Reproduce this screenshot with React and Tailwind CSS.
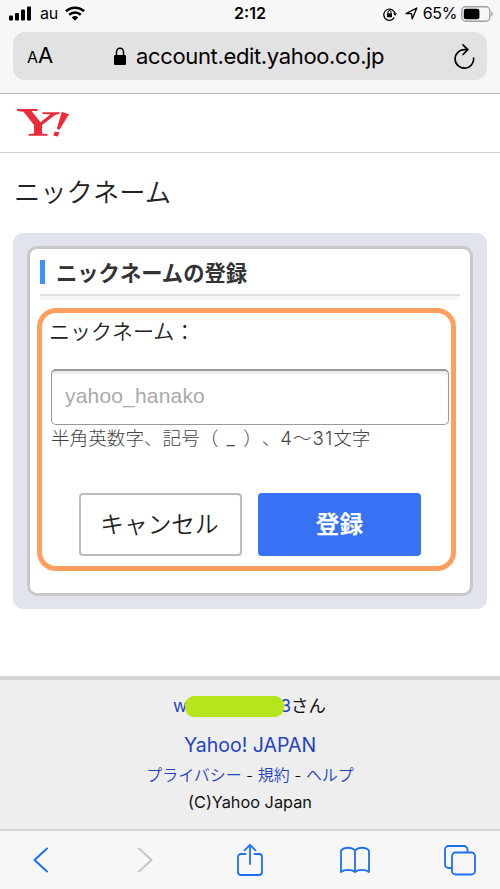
import React, { useState } from 'react';

function StatusBar() {
  return (
    <div className="flex h-8 items-start text-black">
      <div className="flex flex-1 items-center pl-[9px] h-[27px]">
        <svg width="22" height="15" viewBox="0 0 22 15" fill="currentColor">
          <rect x="0" y="9.5" width="4" height="5" rx="1" />
          <rect x="6" y="7" width="4" height="7.5" rx="1" />
          <rect x="12" y="3.5" width="4" height="11" rx="1" />
          <rect x="18" y="0.5" width="4" height="14" rx="1" />
        </svg>
        <span className="ml-[9px] text-[16px] leading-[27px] tracking-[-0.2px]">au</span>
        <svg className="ml-[7px]" width="20" height="15" viewBox="0 0 20 15" fill="none" stroke="currentColor">
          <path d="M1 5.2C6 .6 14 .6 19 5.2" strokeWidth="2.7" />
          <path d="M4.2 8.8C7.6 5.8 12.4 5.8 15.8 8.8" strokeWidth="2.5" />
          <path d="M6.8 11.4a4.8 4.8 0 0 1 6.400 0L10 14.700z" fill="currentColor" stroke="none" />
        </svg>
      </div>
      <span className="mr-[2px] text-[16px] font-semibold leading-[27px]">2:12</span>
      <div className="flex flex-1 items-center justify-end pr-[7px] h-[27px]">
        <svg width="14" height="14" viewBox="0 0 14 14" fill="none" stroke="currentColor" strokeWidth="1.3">
          <path d="M11.2 10.6A5.600 5.600 0 1 1 12 7.400" />
          <path d="M10.1 6.200h3.800L12 9z" fill="currentColor" stroke="none" />
          <rect x="4" y="6.200" width="5" height="4" rx=".5" fill="currentColor" stroke="none" />
          <path d="M5 6.300V5a1.500 1.500 0 0 1 3 0v1.300" strokeWidth="1" />
        </svg>
        <svg className="ml-[8px]" width="13" height="13" viewBox="0 0 13 13" fill="none" stroke="currentColor" strokeWidth="1.3" strokeLinejoin="round">
          <path d="M1 6.600 11.800 1 7.200 12 6.600 6.700z" />
        </svg>
        <span className="ml-[5px] text-[16px] leading-[27px] tracking-[-0.4px]">65%</span>
        <svg className="ml-[4px]" width="32" height="16" viewBox="0 0 32 16">
          <rect x=".8" y=".8" width="28" height="14.4" rx="4" fill="none" stroke="#a0a0a0" strokeWidth="1.4" />
          <rect x="2.8" y="2.8" width="15.6" height="10.4" rx="2" />
          <path d="M30.200 5.400c2 .8 2 4.400 0 5.200z" fill="#a0a0a0" />
        </svg>
      </div>
    </div>
  );
}

function AddressBar() {
  return (
    <div className="mx-[13px] flex h-12 items-center rounded-[12px] bg-[#e2e2e2] px-[14px] text-black">
      <div className="flex w-[86px] items-baseline">
        <span className="text-[16px] leading-[28px]">A</span>
        <span className="text-[22px] leading-[28px]">A</span>
      </div>
      <svg width="14" height="19" viewBox="0 0 14 19">
        <rect x="1" y="8" width="12" height="10" rx="1.3" />
        <path d="M3.500 8.500V5a3.500 3.800 0 0 1 7 0v3.500" fill="none" stroke="currentColor" strokeWidth="1.5" />
      </svg>
      <span className="ml-[9px] text-[22px] leading-[28px] tracking-[-0.35px] whitespace-nowrap">account.edit.yahoo.co.jp</span>
      <svg className="ml-auto mr-[-3px]" width="24" height="26" viewBox="0 0 24 26" fill="none" stroke="currentColor" strokeWidth="1.7">
        <path d="M15.500 6.600H12.500A9.300 9.300 0 1 0 21.600 15" strokeLinecap="round" />
        <path d="m11 1.800 4.800 4.900-4.800 4.800" strokeLinecap="round" strokeLinejoin="round" />
      </svg>
    </div>
  );
}

function YahooLogo() {
  return (
    <svg width="52" height="28" viewBox="0 0 52 28" fill="#ee2b38">
      <path d="M0 0H20.500V2H14.500L23.500 13.200 33.500 5.200 25.500 5V3.200H42.500V5L38 6 25 16V24.700L30.500 25V26.800H11.500V25L17 24.500V16L6.500 2.800 0 2z" />
      <path d="M44.800 2.800 52 5.200 42.500 20.800 39.800 19.800z" />
      <path d="m37.800 22.400 4.700 1.200-1.800 4-4.500-1.200z" />
    </svg>
  );
}

function RegisterForm() {
  const [nickname, setNickname] = useState('');

  return (
    <div className="relative mt-2 ml-[-3px] h-[263px] w-[419px] pt-[11px] pl-[14px]">
      {/* highlight frame around the form */}
      <div className="pointer-events-none absolute inset-0 rounded-[19px] border-[5px] border-[#ff9f5f]" />
      <label htmlFor="nickname" className="block h-[50px] ml-[-2px] pt-px text-[21px] font-[350] leading-6 text-[#222]">
        ニックネーム：
      </label>
      <input
        id="nickname"
        value={nickname}
        onChange={(e) => setNickname(e.target.value)}
        placeholder="yahoo_hanako"
        className="block h-[56px] w-[398px] rounded-[5px] border border-t-2 border-[#999] bg-white px-[13px] pb-1 font-['Liberation_Sans',sans-serif] text-[21px] tracking-[0.18px] text-[#222] shadow-[inset_0_3px_2px_#eee] placeholder:text-[#a9a9a9]"
      />
      <p className="h-[68px] pt-px text-[18.6px] font-light leading-6 text-[#444] whitespace-nowrap [text-spacing-trim:space-all] [word-spacing:3px]">
        半角英数字、記号（ _ ）、<span className="tracking-[1px]">4～31</span>文字
      </p>
      <div className="flex gap-4 pl-7">
        <button type="button" className="h-[63px] w-[163px] rounded-[4px] border-2 border-[#bbb] bg-white pt-px pr-[2px] text-[23.7px] font-[350] text-[#222]">
          キャンセル
        </button>
        <button type="button" className="h-[63px] w-[163px] rounded-[4px] bg-[#3873f5] pt-px text-[23.7px] font-bold text-white">
          登録
        </button>
      </div>
    </div>
  );
}

function Footer() {
  return (
    <footer className="flex h-[153px] flex-col items-center border-t-4 border-[#d3d5d6] bg-[#eee] text-center text-[#111]">
      <p className="mt-[12px] mr-px flex h-7 items-center text-[17.5px] leading-7">
        <a href="#" className="relative flex w-[118px] justify-between text-[#1d43c6]">
          <span>w</span>
          <span>3</span>
          <span className="absolute left-[12px] top-[4px] h-[21px] w-[99px] rounded-[9px] bg-[#b5e61d]" />
        </a>
        <span>さん</span>
      </p>
      <a href="#" className="mt-[11px] text-[19.5px] leading-7 text-[#1d43c6]">Yahoo! JAPAN</a>
      <p className="mt-[5px] text-[15.95px] font-[350] leading-6">
        <a href="#" className="text-[#1d43c6]">プライバシー</a>
        {' - '}
        <a href="#" className="text-[#1d43c6]">規約</a>
        {' - '}
        <a href="#" className="text-[#1d43c6]">ヘルプ</a>
      </p>
      <p className="mt-[2px] text-[16.3px] leading-6">(C)Yahoo Japan</p>
    </footer>
  );
}

function Toolbar() {
  return (
    <nav className="flex h-[60px] items-center justify-between border-t-2 border-[#d2d2d2] bg-[#f7f7f7] px-5 text-[#1c6ff5]">
      <button type="button" className="flex w-10 justify-center">
        <svg width="17" height="28" viewBox="0 0 17 28" fill="none" stroke="currentColor" strokeWidth="2" strokeLinecap="round" strokeLinejoin="round">
          <path d="M15 2.500 2.500 14 15 25.500" />
        </svg>
      </button>
      <button type="button" className="flex w-10 justify-center text-[#c5c5c5]">
        <svg width="17" height="28" viewBox="0 0 17 28" fill="none" stroke="currentColor" strokeWidth="2" strokeLinecap="round" strokeLinejoin="round">
          <path d="m2 2.500 12.500 11.500-12.500 11.500" />
        </svg>
      </button>
      <button type="button" className="flex w-10 justify-center">
        <svg width="28" height="34" viewBox="0 0 28 34" fill="none" stroke="currentColor" strokeWidth="1.8" strokeLinecap="round" strokeLinejoin="round">
          <path d="M9.500 11H5a3 3 0 0 0-3 3v15a3 3 0 0 0 3 3h18a3 3 0 0 0 3-3V14a3 3 0 0 0-3-3h-4.500M14 21V2M8.500 7.300 14 1.800l5.500 5.500" />
        </svg>
      </button>
      <button type="button" className="flex w-10 justify-center">
        <svg width="32" height="28" viewBox="0 0 32 28" fill="none" stroke="currentColor" strokeWidth="1.8" strokeLinejoin="round">
          <path d="M16 4.500C12.500.800 5.500.800 2 4.500V26c3.500-2.900 10.500-2.900 14 0 3.500-2.900 10.500-2.900 14 0V4.500C26.500.800 19.500.800 16 4.500zM16 4.500V26" />
        </svg>
      </button>
      <button type="button" className="flex w-10 justify-center">
        <svg width="34" height="32" viewBox="0 0 34 32" fill="none" stroke="currentColor" strokeWidth="1.8">
          <path d="M9 24H5.500a3.500 3.500 0 0 1-3.500-3.500v-15A3.500 3.500 0 0 1 5.500 2H21a3.500 3.500 0 0 1 3.500 3.500V8" />
          <rect x="9" y="8.500" width="23" height="22" rx="3.500" />
        </svg>
      </button>
    </nav>
  );
}

export default function App() {
  return (
    <div className="h-[889px] w-[500px] overflow-hidden bg-white font-['Inter','Noto_Sans_CJK_JP',sans-serif]">
      <div className="h-[94px] border-b border-[#b8b8b8] bg-[#f7f7f7]">
        <StatusBar />
        <AddressBar />
      </div>
      <header className="h-[59px] border-b border-[#d0d0d0] pl-[17px] pt-[15px]">
        <YahooLogo />
      </header>
      <main className="h-[523px]">
        <h1 className="h-20 pl-[14px] pt-[24px] text-[26.3px] font-[350] leading-8 text-[#222]">ニックネーム</h1>
        <section className="mx-[13px] h-[376px] rounded-[10px] bg-[#e1e4ec] px-[14px] pt-[13px]">
          <div className="h-[350px] rounded-[10px] border-[3px] border-[#c8c8c8] bg-white px-[10px] pt-[11px]">
            <h2 className="h-6 border-l-[5px] border-[#3b93fb] pl-[11px] pt-px text-[21.3px] font-bold leading-6 text-[#333]">
              ニックネームの登録
            </h2>
            <div className="mt-[10px] h-[6px] border-t-2 border-[#e0e0e0] bg-[#f6f6f6]" />
            <RegisterForm />
          </div>
        </section>
      </main>
      <Footer />
      <Toolbar />
    </div>
  );
}
